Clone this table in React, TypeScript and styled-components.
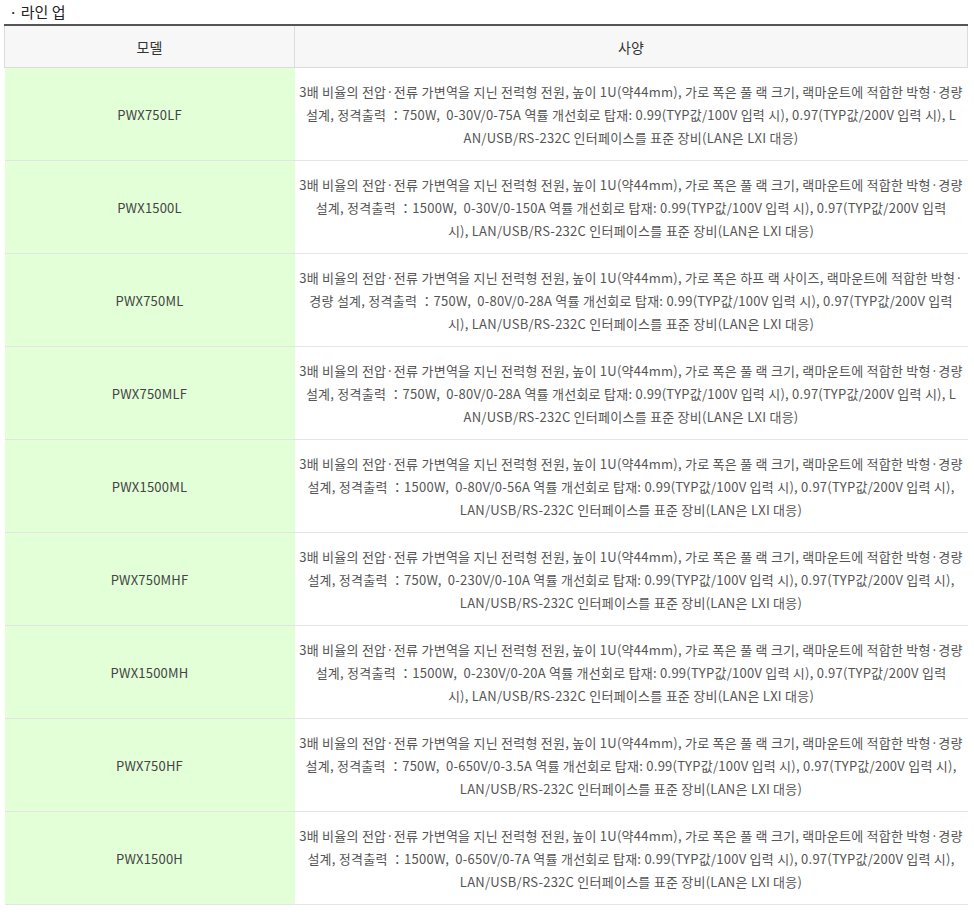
import React from "react";
import styled, { createGlobalStyle } from "styled-components";

const Global = createGlobalStyle`
  html, body { margin: 0; padding: 0; background: #fff; }
  body { font-family: "Noto Sans CJK KR", "Noto Sans", sans-serif; }
`;

const Page = styled.div`
  padding: 0 6px 0 4px;
  width: 964px;
`;

const Title = styled.div`
  font-size: 15px;
  line-height: 18px;
  color: #222;
  padding: 3px 0 3px 5px;
  height: 18px;
`;

const Table = styled.table`
  width: 964px;
  border-collapse: collapse;
  table-layout: fixed;
  border-top: 2px solid #555;
`;

const HeadCell = styled.th<{ $w?: number }>`
  width: ${(p) => (p.$w ? `${p.$w}px` : "auto")};
  height: 41px;
  padding: 0;
  background: #f7f7f7;
  border: 1px solid #dcdcdc;
  font-weight: 400;
  font-size: 14px;
  color: #333;
  text-align: center;
  vertical-align: middle;
`;

const Row = styled.tr`
  border-bottom: 1px solid #e4e4e4;
`;

const ModelCell = styled.td`
  height: 92px;
  padding: 0;
  background: #e2ffd8;
  color: #444;
  font-size: 13px;
  letter-spacing: 0.2px;
  text-align: center;
  vertical-align: middle;
`;

const SpecCell = styled.td`
  padding: 0;
  color: #555;
  font-size: 13px;
  text-align: center;
  vertical-align: middle;
`;

const Line = styled.span`
  display: block;
  white-space: pre;
  line-height: 23px;
  letter-spacing: 0.25px;
`;

const L1 =
  "3배 비율의 전압·전류 가변역을 지닌 전력형 전원, 높이 1U(약44mm), 가로 폭은 풀 랙 크기, 랙마운트에 적합한 박형·경량";

const rows: { model: string; lines: string[] }[] = [
  {
    model: "PWX750LF",
    lines: [
      L1,
      "설계, 정격출력 ：750W,  0-30V/0-75A 역률 개선회로 탑재: 0.99(TYP값/100V 입력 시), 0.97(TYP값/200V 입력 시), L",
      "AN/USB/RS-232C 인터페이스를 표준 장비(LAN은 LXI 대응)",
    ],
  },
  {
    model: "PWX1500L",
    lines: [
      L1,
      "설계, 정격출력 ：1500W,  0-30V/0-150A 역률 개선회로 탑재: 0.99(TYP값/100V 입력 시), 0.97(TYP값/200V 입력",
      "시), LAN/USB/RS-232C 인터페이스를 표준 장비(LAN은 LXI 대응)",
    ],
  },
  {
    model: "PWX750ML",
    lines: [
      "3배 비율의 전압·전류 가변역을 지닌 전력형 전원, 높이 1U(약44mm), 가로 폭은 하프 랙 사이즈, 랙마운트에 적합한 박형·",
      "경량 설계, 정격출력 ：750W,  0-80V/0-28A 역률 개선회로 탑재: 0.99(TYP값/100V 입력 시), 0.97(TYP값/200V 입력",
      "시), LAN/USB/RS-232C 인터페이스를 표준 장비(LAN은 LXI 대응)",
    ],
  },
  {
    model: "PWX750MLF",
    lines: [
      L1,
      "설계, 정격출력 ：750W,  0-80V/0-28A 역률 개선회로 탑재: 0.99(TYP값/100V 입력 시), 0.97(TYP값/200V 입력 시), L",
      "AN/USB/RS-232C 인터페이스를 표준 장비(LAN은 LXI 대응)",
    ],
  },
  {
    model: "PWX1500ML",
    lines: [
      L1,
      "설계, 정격출력 ：1500W,  0-80V/0-56A 역률 개선회로 탑재: 0.99(TYP값/100V 입력 시), 0.97(TYP값/200V 입력 시),",
      "LAN/USB/RS-232C 인터페이스를 표준 장비(LAN은 LXI 대응)",
    ],
  },
  {
    model: "PWX750MHF",
    lines: [
      L1,
      "설계, 정격출력 ：750W,  0-230V/0-10A 역률 개선회로 탑재: 0.99(TYP값/100V 입력 시), 0.97(TYP값/200V 입력 시),",
      "LAN/USB/RS-232C 인터페이스를 표준 장비(LAN은 LXI 대응)",
    ],
  },
  {
    model: "PWX1500MH",
    lines: [
      L1,
      "설계, 정격출력 ：1500W,  0-230V/0-20A 역률 개선회로 탑재: 0.99(TYP값/100V 입력 시), 0.97(TYP값/200V 입력",
      "시), LAN/USB/RS-232C 인터페이스를 표준 장비(LAN은 LXI 대응)",
    ],
  },
  {
    model: "PWX750HF",
    lines: [
      L1,
      "설계, 정격출력 ：750W,  0-650V/0-3.5A 역률 개선회로 탑재: 0.99(TYP값/100V 입력 시), 0.97(TYP값/200V 입력 시),",
      "LAN/USB/RS-232C 인터페이스를 표준 장비(LAN은 LXI 대응)",
    ],
  },
  {
    model: "PWX1500H",
    lines: [
      L1,
      "설계, 정격출력 ：1500W,  0-650V/0-7A 역률 개선회로 탑재: 0.99(TYP값/100V 입력 시), 0.97(TYP값/200V 입력 시),",
      "LAN/USB/RS-232C 인터페이스를 표준 장비(LAN은 LXI 대응)",
    ],
  },
];

export default function App() {
  return (
    <>
      <Global />
      <Page>
        <Title>· 라인 업</Title>
        <Table>
          <thead>
            <tr>
              <HeadCell $w={289}>모델</HeadCell>
              <HeadCell>사양</HeadCell>
            </tr>
          </thead>
          <tbody>
            {rows.map((r) => (
              <Row key={r.model}>
                <ModelCell>{r.model}</ModelCell>
                <SpecCell>
                  {r.lines.map((l, i) => (
                    <Line key={i}>{l}</Line>
                  ))}
                </SpecCell>
              </Row>
            ))}
          </tbody>
        </Table>
      </Page>
    </>
  );
}
